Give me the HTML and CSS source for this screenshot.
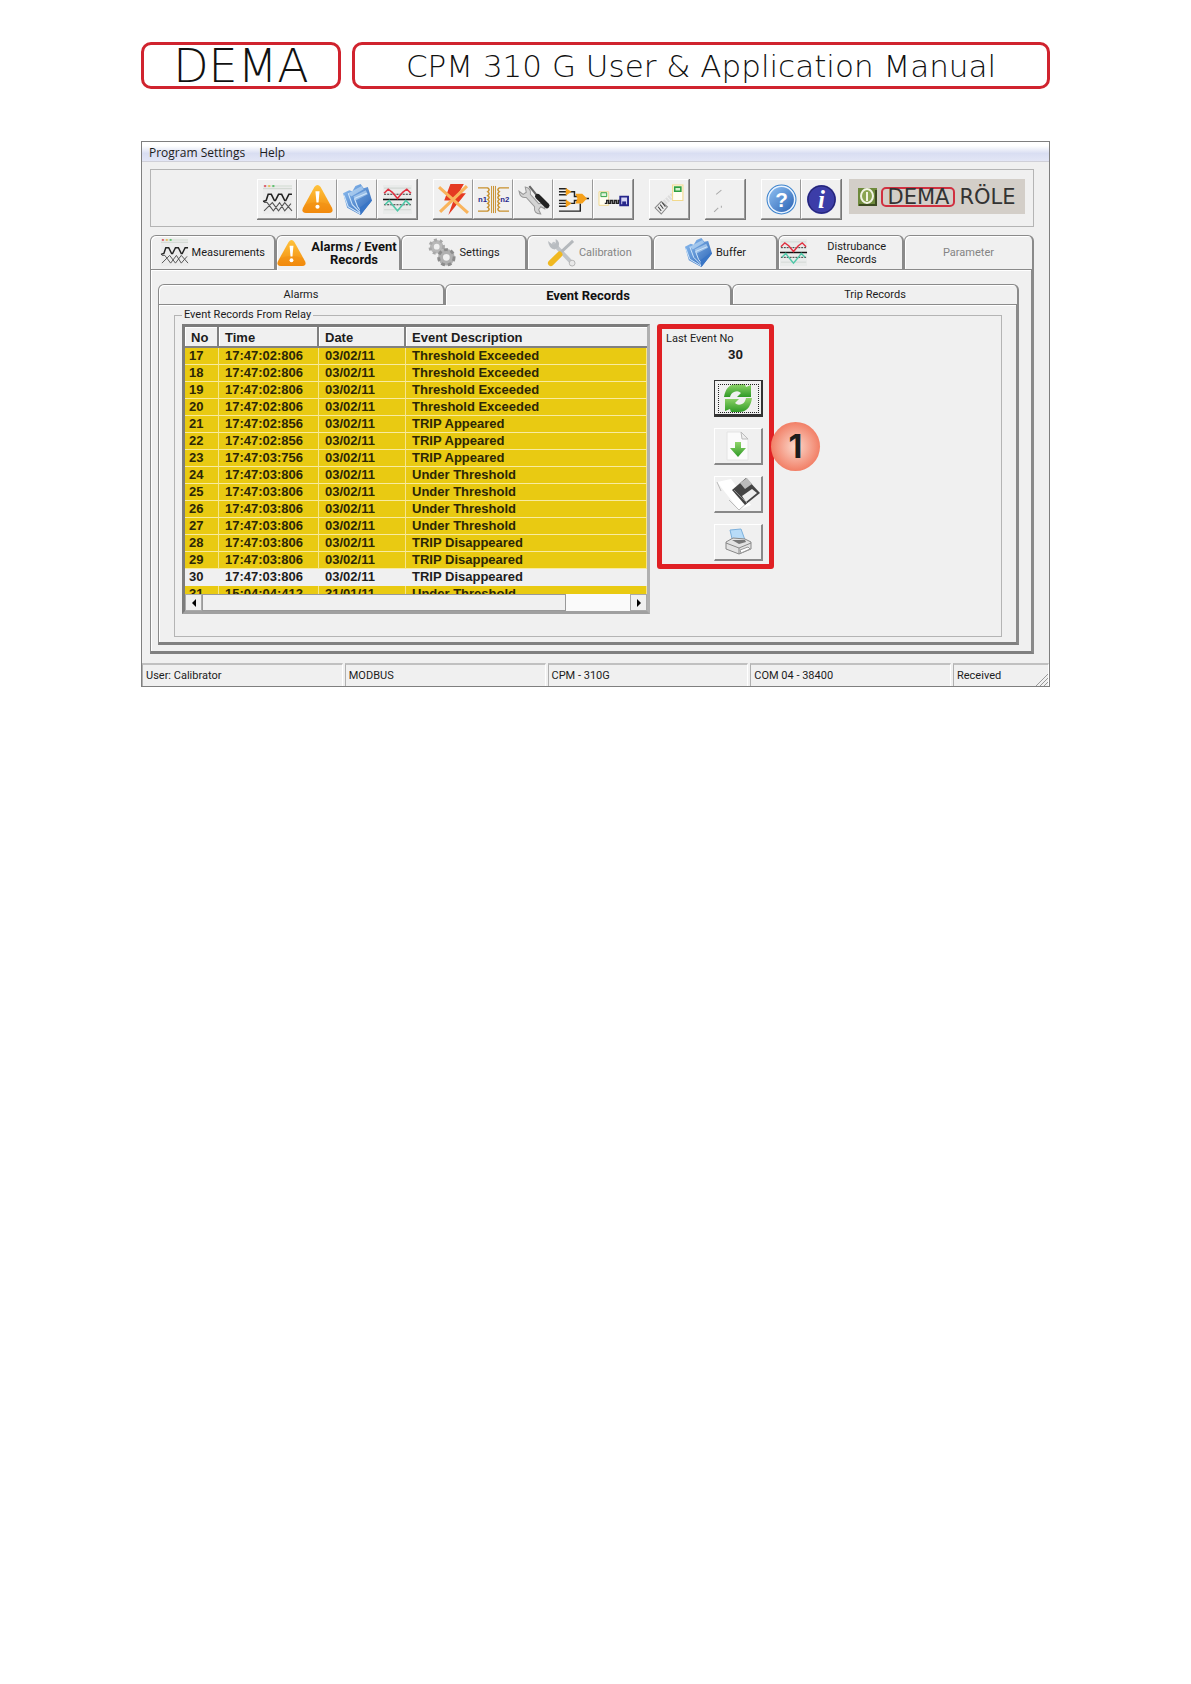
FILE: index.html
```html
<!DOCTYPE html>
<html lang="en">
<head>
    <meta charset="UTF-8">
    <meta name="viewport" content="width=device-width, initial-scale=1.0">
    <title>CPM 310 G User &amp; Application Manual</title>
    <link rel="stylesheet" href="styles.css">
</head>

<body>

    <!-- Shared icons -->
    <svg class="sprite" aria-hidden="true">
        <defs>
            <linearGradient id="orange" x1="0" y1="0" x2="0" y2="1">
                <stop offset="0" stop-color="#ffc33c"/>
                <stop offset="1" stop-color="#f28a0c"/>
            </linearGradient>
            <linearGradient id="blue" x1="0" y1="0" x2="1" y2="1">
                <stop offset="0" stop-color="#8fc0f2"/>
                <stop offset="1" stop-color="#2a62b4"/>
            </linearGradient>
            <linearGradient id="green" x1="0" y1="0" x2="0" y2="1">
                <stop offset="0" stop-color="#8fd46a"/>
                <stop offset="1" stop-color="#2f9a26"/>
            </linearGradient>
        </defs>
        <symbol id="waves" viewBox="0 0 30 30">
            <rect x="1" y="1" width="28" height="28" fill="#ececec"/>
            <path d="M1 4.500h28" stroke="#cfd6cf" stroke-width="1"/>
            <path d="M1 1h28v2H1z" fill="#dfe5df"/>
            <path d="M2 1h2v2H2z" fill="#e06070"/>
            <path d="M6 1h2v2H6z" fill="#e8c060"/>
            <path d="M10 1h2v2h-2z" fill="#60c070"/>
            <path d="M1 17l3-1 2-6h3l3 6h1l3-6h3l3 6h1l3-6h3" fill="none" stroke="#222" stroke-width="1.500"/>
            <path d="M2 26l8-8 6 8 6-8 7 8M2 18h3l6 8 6-8 5 8 6-7" fill="none" stroke="#555" stroke-width="1"/>
        </symbol>
        <symbol id="warning" viewBox="0 0 30 30">
            <path d="M12 3q3-4 6 0l11 20q2 5-3 5H4q-5 0-3-5z" fill="url(#orange)"/>
            <path d="M3 20q12-5 24 0l2 4q0 4-3 4H4q-3 0-3-4z" fill="#f08a10" opacity=".4"/>
            <path d="M13 7h4l-1 11h-2z" fill="#fff"/>
            <circle cx="15" cy="22" r="2" fill="#fff"/>
        </symbol>
        <symbol id="books" viewBox="0 0 30 30">
            <path d="M1 9l6-3 3 1 3-5 5-2 3 4 4-1 4 13-11 14L5 23z" fill="url(#blue)"/>
            <path d="M6 9l13-7 2 3L9 12zM11 12l12-6 2 4-12 6z" fill="#d8ecfc" opacity=".5"/>
            <path d="M2 11l4 11 12 7M6 9l4 11 8 8M12 14l3 8 4 5M12 14l12-5" fill="none" stroke="#cfe6fb" stroke-width="1"/>
            <path d="M18 30l-1-7 11-8 1 1z" fill="#3a76c6"/>
        </symbol>
        <symbol id="disturb" viewBox="0 0 30 30">
            <rect x="1" y="1" width="28" height="28" fill="#e9ebea"/>
            <path d="M2 4h26M2 25h26" stroke="#d2d8d4"/>
            <path d="M2 10h26M2 20h26" stroke="#333" stroke-dasharray="2 1"/>
            <path d="M1 15h28" stroke="#111" stroke-width="1.500"/>
            <path d="M2 9l4-4 4 3 5 6 5-6 4-3 4 4" fill="none" stroke="#e03040" stroke-width="1.500"/>
            <path d="M3 20l4-4 3 4 5 6 5-6 3-4 4 4" fill="none" stroke="#50c8a8" stroke-width="1.500"/>
        </symbol>
    </svg>

    <!-- Page header -->
    <header class="page-header">
        <div class="brand">DEMA</div>
        <h1 class="doc-title">CPM 310 G User &amp; Application Manual</h1>
    </header>

    <!-- Application window -->
    <main class="window">
        <nav class="menu-bar">
            <button>Program Settings</button>
            <button>Help</button>
        </nav>

        <div class="toolbar">
            <div class="tool-group">
                <button aria-label="Measurements"><svg><use href="#waves"/></svg></button>
                <button aria-label="Alarms"><svg><use href="#warning"/></svg></button>
                <button aria-label="Buffer"><svg><use href="#books"/></svg></button>
                <button aria-label="Disturbance"><svg><use href="#disturb"/></svg></button>
            </div>
            <div class="tool-group">
                <button aria-label="Trip off">
                    <svg viewBox="0 0 30 30">
                        <path d="M12 0h13l-5 9h7L10 30l5-14H6z" fill="#e53a22"/>
                        <path d="M1 3l28 25M28 2L2 27" stroke="#f9b45c" stroke-width="3"/>
                    </svg>
                </button>
                <button aria-label="Transformer">
                    <svg viewBox="0 0 32 30">
                        <path d="M14 1v28M16 1v28M18 1v28" stroke="#c8902c" stroke-width="1"/>
                        <path d="M0 3h10q3 2 0 4 3 2 0 4 3 2 0 4 3 2 0 4 3 2 0 4 3 2 0 4H0M32 3H22q-3 2 0 4-3 2 0 4-3 2 0 4-3 2 0 4-3 2 0 4-3 2 0 4h10" fill="none" stroke="#c8902c" stroke-width="1.500"/>
                        <text x="0" y="18" class="coil">n1</text>
                        <text x="23" y="18" class="coil">n2</text>
                    </svg>
                </button>
                <button aria-label="Tools">
                    <svg viewBox="0 0 30 30">
                        <path d="M1 7l4 3 3-2-1-5q6 1 5 7l8 9q6-1 6 5l-4-2-2 3 2 4q-7 0-6-7l-8-9Q2 14 1 7z" fill="#d4d4d4" stroke="#999" stroke-width="1"/>
                        <path d="M11 2l8 10" stroke="#666" stroke-width="2"/>
                        <path d="M19 12l9 9" stroke="#222" stroke-width="5" stroke-linecap="round"/>
                    </svg>
                </button>
                <button aria-label="Logic">
                    <svg viewBox="0 0 32 30">
                        <path d="M1 4h8M1 7h8M1 10h8M1 16h8M1 19h8M1 22h8M1 27h22v-8M12 7h5v5h3M12 19h5v-3h3M28 14h4" fill="none" stroke="#222" stroke-width="1.500"/>
                        <path d="M8 3l6 4-6 4zM8 15l6 4-6 4zM18 9h7l5 5-5 5h-7l2-5z" fill="#f5a01a"/>
                    </svg>
                </button>
                <button aria-label="Save to relay">
                    <svg viewBox="0 0 32 30">
                        <path d="M1 7h10v14H1z" fill="#fffdf0" stroke="#f0d890"/>
                        <path d="M3 8h6v4H3z" fill="#e0f5dc" stroke="#2fa040"/>
                        <path d="M7 19h2v-3h2v3h2v-3h2v3h2v-3h2v3h2v-3h2v3" fill="none" stroke="#222" stroke-width="1.500"/>
                        <path d="M23 12h8v9h-8z" fill="#d6d6f5" stroke="#28288c" stroke-width="2"/>
                        <path d="M25 17h4v4h-4z" fill="#28288c"/>
                    </svg>
                </button>
            </div>
            <div class="tool-group">
                <button aria-label="Connect">
                    <svg viewBox="0 0 30 30">
                        <path d="M8 20L20 9" stroke="#ddd" stroke-width="5" stroke-dasharray="2 1"/>
                        <path d="M18 1h10v15H18z" fill="#fffef4" stroke="#f2d98c"/>
                        <path d="M20 3h6v4h-6z" fill="#d4f0d0" stroke="#2fa040" stroke-width="1.500"/>
                        <path d="M1 23l6-6 6 5-6 7z" fill="#eee" stroke="#888"/>
                        <path d="M4 22l3 4M6 20l3 4M8 18l3 4" stroke="#444"/>
                    </svg>
                </button>
            </div>
            <div class="tool-group">
                <button aria-label="Disconnect">
                    <svg viewBox="0 0 30 30">
                        <path d="M6 10l5-4M4 27l4-4M11 21v2" stroke="#aaa" fill="none"/>
                    </svg>
                </button>
            </div>
            <div class="tool-group">
                <button aria-label="Help">
                    <svg viewBox="0 0 30 30">
                        <circle cx="15" cy="15" r="14" fill="#eaf4ff" stroke="#3c82cc"/>
                        <circle cx="15" cy="15" r="12" fill="url(#blue)"/>
                        <text x="15" y="22" class="glyph">?</text>
                    </svg>
                </button>
                <button aria-label="About">
                    <svg viewBox="0 0 30 30">
                        <circle cx="15" cy="15" r="14" fill="#3c3da8"/>
                        <circle cx="15" cy="15" r="13" fill="none" stroke="#22226a" stroke-width="1"/>
                        <text x="15" y="23" class="glyph info">i</text>
                    </svg>
                </button>
            </div>
            <div class="logo">
                <svg viewBox="0 0 19 18">
                    <path d="M0 0h19v18H0z" fill="#6f8a3c"/>
                    <path d="M1 17h17V2" fill="none" stroke="#3c4a20" stroke-width="2"/>
                    <ellipse cx="9" cy="8" rx="6" ry="7" fill="#8ba552" stroke="#f2f4e4" stroke-width="2"/>
                    <path d="M8 4h2v9H8z" fill="#f2f4e4"/>
                </svg>
                <span class="logo-dema">DEMA</span>
                <span>RÖLE</span>
            </div>
        </div>

        <div class="tabs main-tabs" role="tablist">
            <button class="tab" role="tab"><svg><use href="#waves"/></svg><span>Measurements</span></button>
            <button class="tab active" role="tab" aria-selected="true"><svg><use href="#warning"/></svg><span>Alarms / Event Records</span></button>
            <button class="tab" role="tab">
                <svg viewBox="0 0 30 30">
                    <circle cx="9" cy="9" r="5" fill="none" stroke="#b8b8b8" stroke-width="4"/>
                    <circle cx="9" cy="9" r="7" fill="none" stroke="#a8a8a8" stroke-width="3" stroke-dasharray="3 3"/>
                    <circle cx="19" cy="20" r="6" fill="none" stroke="#b0b0b0" stroke-width="5"/>
                    <circle cx="19" cy="20" r="8" fill="none" stroke="#8c8c8c" stroke-width="3" stroke-dasharray="4 3"/>
                </svg>
                <span>Settings</span>
            </button>
            <button class="tab" role="tab" disabled>
                <svg viewBox="0 0 30 30">
                    <path d="M7 6l19 20" stroke="#c0c4c8" stroke-width="4" stroke-linecap="round"/>
                    <path d="M1 3l5 4 3-1 0-5q5 3 3 8l-4 3Q2 11 1 3z" fill="#b8bcc0"/>
                    <circle cx="26" cy="26" r="3" fill="#e8e8e8" stroke="#b4b4b4"/>
                    <path d="M12 17L27 3" stroke="#b4b8bc" stroke-width="3"/>
                    <path d="M4 26l9-9" stroke="#f0b820" stroke-width="6" stroke-linecap="round"/>
                </svg>
                <span>Calibration</span>
            </button>
            <button class="tab" role="tab"><svg><use href="#books"/></svg><span>Buffer</span></button>
            <button class="tab spread" role="tab"><svg><use href="#disturb"/></svg><span>Distrubance Records</span></button>
            <button class="tab" role="tab" disabled><span>Parameter</span></button>
        </div>

        <div class="panel main-panel">
            <div class="tabs sub-tabs" role="tablist">
                <button class="tab" role="tab">Alarms</button>
                <button class="tab active" role="tab" aria-selected="true">Event Records</button>
                <button class="tab" role="tab">Trip Records</button>
            </div>

            <div class="panel sub-panel">
                <fieldset class="records">
                    <legend>Event Records From Relay</legend>

                    <div class="grid-box">
                        <div class="grid-view">
                            <table class="events">
                                <thead>
                                    <tr>
                                        <th class="col-no">No</th>
                                        <th class="col-time">Time</th>
                                        <th class="col-date">Date</th>
                                        <th>Event Description</th>
                                    </tr>
                                </thead>
                                <tbody>
                                    <tr><td>17</td><td>17:47:02:806</td><td>03/02/11</td><td>Threshold Exceeded</td></tr>
                                    <tr><td>18</td><td>17:47:02:806</td><td>03/02/11</td><td>Threshold Exceeded</td></tr>
                                    <tr><td>19</td><td>17:47:02:806</td><td>03/02/11</td><td>Threshold Exceeded</td></tr>
                                    <tr><td>20</td><td>17:47:02:806</td><td>03/02/11</td><td>Threshold Exceeded</td></tr>
                                    <tr><td>21</td><td>17:47:02:856</td><td>03/02/11</td><td>TRIP Appeared</td></tr>
                                    <tr><td>22</td><td>17:47:02:856</td><td>03/02/11</td><td>TRIP Appeared</td></tr>
                                    <tr><td>23</td><td>17:47:03:756</td><td>03/02/11</td><td>TRIP Appeared</td></tr>
                                    <tr><td>24</td><td>17:47:03:806</td><td>03/02/11</td><td>Under Threshold</td></tr>
                                    <tr><td>25</td><td>17:47:03:806</td><td>03/02/11</td><td>Under Threshold</td></tr>
                                    <tr><td>26</td><td>17:47:03:806</td><td>03/02/11</td><td>Under Threshold</td></tr>
                                    <tr><td>27</td><td>17:47:03:806</td><td>03/02/11</td><td>Under Threshold</td></tr>
                                    <tr><td>28</td><td>17:47:03:806</td><td>03/02/11</td><td>TRIP Disappeared</td></tr>
                                    <tr><td>29</td><td>17:47:03:806</td><td>03/02/11</td><td>TRIP Disappeared</td></tr>
                                    <tr class="selected"><td>30</td><td>17:47:03:806</td><td>03/02/11</td><td>TRIP Disappeared</td></tr>
                                    <tr><td>31</td><td>15:04:04:412</td><td>31/01/11</td><td>Under Threshold</td></tr>
                                </tbody>
                            </table>
                        </div>
                        <div class="scrollbar">
                            <button aria-label="Scroll left"><svg viewBox="0 0 8 8"><path d="M6 0v8L2 4z"/></svg></button>
                            <div class="track"><div class="thumb"></div></div>
                            <button aria-label="Scroll right"><svg viewBox="0 0 8 8"><path d="M2 0v8l4-4z"/></svg></button>
                        </div>
                    </div>

                    <div class="actions">
                        <span class="last-label">Last Event No</span>
                        <span class="last-value">30</span>
                        <div class="action-list">
                            <button class="focused" aria-label="Refresh">
                                <svg viewBox="0 0 32 30">
                                    <path d="M2 14Q4 1 15 1l8 0 1 3 5-2v12H15l4-4q-3-3-7-1-3 1-4 5z" fill="url(#green)"/>
                                    <path d="M30 15q-2 14-13 14H9l-1-3-5 2V16h14l-4 4q3 3 7 1 3-1 4-6z" fill="url(#green)"/>
                                </svg>
                            </button>
                            <button aria-label="Download">
                                <svg viewBox="0 0 32 30">
                                    <path d="M5 1h14l7 7v21H5z" fill="#fbfbfb" stroke="#e4e4e4"/>
                                    <path d="M19 1l7 7h-6z" fill="#eee" stroke="#bbb"/>
                                    <path d="M13 11h6v6h5l-8 9-8-9h5z" fill="url(#green)"/>
                                </svg>
                            </button>
                            <button aria-label="Save">
                                <svg class="wide" viewBox="0 0 46 34">
                                    <path d="M2 5l14-3 20 26-12 5z" fill="#fff"/>
                                    <path d="M2 5l4 9M14 23l10 10 9-8" fill="none" stroke="#bbb" stroke-width="1"/>
                                    <path d="M31 1l14 15-15 12-13-15z" fill="#444"/>
                                    <path d="M25 6l7-5 5 6-7 5z" fill="#bbb"/>
                                    <path d="M27 19l10-7 5 4-11 9z" fill="#eee"/>
                                    <path d="M19 13l13 13" stroke="#888" stroke-width="1"/>
                                </svg>
                            </button>
                            <button aria-label="Print">
                                <svg viewBox="0 0 32 30">
                                    <path d="M8 3l11-1 4 11-12 3z" fill="#b8dcf8" stroke="#7cb0dc"/>
                                    <path d="M4 15l7-4 12 1 6 3v7l-12 5-13-5z" fill="#e2e2e2" stroke="#888"/>
                                    <path d="M4 16l13 5 12-5M17 21v6" fill="none" stroke="#888"/>
                                    <path d="M10 13l13 0 1 2-7 2z" fill="#777"/>
                                    <path d="M18 23l8-3 2 2-9 4z" fill="#fff" stroke="#999"/>
                                </svg>
                            </button>
                        </div>
                        <span class="callout">1</span>
                    </div>
                </fieldset>
            </div>
        </div>

        <footer class="status-bar">
            <span>User: Calibrator</span>
            <span>MODBUS</span>
            <span>CPM - 310G</span>
            <span>COM 04 - 38400</span>
            <span class="last">Received
                <svg viewBox="0 0 12 12"><path d="M0 12L12 0M4 12l8-8M8 12l4-4" stroke="#999" fill="none"/></svg>
            </span>
        </footer>
    </main>

</body>
</html>
```
FILE: styles.css
```css
* {
    box-sizing: border-box;
}

body {
    margin: 0;
    padding: 42px 141px;
    background: #fff;
    color: #1c1c1c;
    font-family: Roboto, sans-serif;
    font-size: 11px;
}

button {
    font: inherit;
    color: inherit;
    background: none;
    border: 0;
    padding: 0;
}

.sprite {
    position: absolute;
    width: 0;
    height: 0;
}

/* Page header */
.page-header {
    display: flex;
    gap: 11px;
    height: 47px;
    font-family: "DejaVu Sans", sans-serif;
    font-weight: 200;
    color: #111;
}

.brand,
.doc-title {
    display: flex;
    align-items: center;
    justify-content: center;
    margin: 0;
    border: 3px solid #d0232e;
    border-radius: 10px;
    white-space: nowrap;
}

.brand {
    flex: 0 0 200px;
    font-size: 46px;
}

.doc-title {
    flex: 1;
    font-size: 31px;
    font-weight: 200;
}

/* Window frame */
.window {
    margin-top: 52px;
    border: 1px solid #7f7f7f;
    background: #f0f0f0;
}

.menu-bar {
    display: flex;
    gap: 14px;
    height: 20px;
    padding: 2px 7px 0;
    background: linear-gradient(#fff 20%, #d9def2 60%, #e3e6f6);
    border-bottom: 1px solid #d0d0d8;
    font-family: "Open Sans", sans-serif;
    font-size: 12px;
    line-height: 18px;
}

/* Toolbar */
.toolbar {
    display: flex;
    justify-content: flex-end;
    gap: 15px;
    height: 58px;
    margin: 7px 15px 0 8px;
    padding: 9px 8px;
    border: 1px solid #b4b4b4;
}

.tool-group {
    display: flex;
    height: 41px;
    border-right: 1px solid #777;
    border-bottom: 1px solid #777;
}

.tool-group button {
    display: flex;
    align-items: center;
    justify-content: center;
    width: 40px;
    border: 1px solid #fff;
    border-right-color: #999;
    border-bottom-color: #999;
}

.tool-group svg {
    width: 31px;
    height: 31px;
    overflow: visible;
}

.coil {
    font: bold 8px "Liberation Sans", sans-serif;
    fill: #28288c;
}

.glyph {
    font: bold 20px "Liberation Sans", sans-serif;
    fill: #fff;
    text-anchor: middle;
}

.info {
    font: italic bold 24px "Liberation Serif", serif;
}

.logo {
    display: flex;
    align-items: center;
    justify-content: center;
    gap: 4px;
    width: 176px;
    height: 35px;
    margin-left: -8px;
    background: #d3cec8;
    color: #333;
    font-family: "DejaVu Sans", sans-serif;
    font-size: 21px;
}

.logo svg {
    flex: none;
    width: 19px;
    height: 18px;
}

.logo-dema {
    padding: 0 4px;
    border: 2px solid #d03040;
    border-radius: 5px;
    line-height: 16px;
}

/* Tabs */
.tabs {
    display: grid;
    grid-template-columns: repeat(3, 1fr);
}

.tab {
    display: flex;
    align-items: center;
    justify-content: center;
    gap: 3px;
    line-height: 13px;
    border: 1px solid #8a8a8a;
    border-right: 2px solid #8a8a8a;
    border-bottom: 0;
    border-radius: 6px 6px 0 0;
    box-shadow: inset 1px 1px #fff;
}

.tab:disabled {
    color: #848484;
}

.tab.active {
    position: relative;
    margin-bottom: -1px;
    background: #f0f0f0;
    color: #111;
    font-size: 13px;
    font-weight: bold;
}

.tab svg {
    flex: none;
    width: 29px;
    height: 29px;
}

.tab.spread span {
    flex: 1;
    padding: 0 8px;
}

.main-tabs {
    grid-template-columns: repeat(6, minmax(0, 1fr)) 130px;
    height: 34px;
    margin: 8px 15px 0 8px;
}

.sub-tabs {
    height: 20px;
}

.panel {
    border: 1px solid #8a8a8a;
    border-right: 3px solid #8a8a8a;
    border-bottom: 3px solid #808080;
    box-shadow: inset 1px 1px #fff;
}

.main-panel {
    margin: 0 15px 0 8px;
    padding: 14px 12px 6px 7px;
}

.sub-panel {
    padding: 3px 14px 5px 15px;
}

/* Event records */
.records {
    display: flex;
    align-items: flex-start;
    gap: 7px;
    min-width: 0;
    margin: 0;
    padding: 2px 7px 22px;
    border: 1px solid #b4b4b4;
}

.records legend {
    padding: 0 2px;
    line-height: 14px;
}

.grid-box {
    flex: 0 0 468px;
    border: 3px solid #7c7c7c;
    border-right-color: #b0b0b0;
    border-bottom-color: #a0a0a0;
}

.grid-view {
    height: 267px;
    overflow: hidden;
}

.events {
    width: 100%;
    table-layout: fixed;
    border-collapse: separate;
    border-spacing: 0;
    font-family: "Liberation Sans", sans-serif;
    font-size: 13px;
    font-weight: bold;
    line-height: 16px;
}

.events th {
    height: 21px;
    padding: 2px 6px 0;
    text-align: left;
    border-right: 2px solid #808080;
    border-bottom: 2px solid #808080;
    box-shadow: inset 1px 1px #fff;
}

.events th:last-child {
    border-right: 0;
}

.events td {
    padding: 0 6px;
    background: #e9ca12;
    border-right: 1px solid #f6e58c;
    border-bottom: 1px solid #f8eba0;
    color: #2c2606;
    white-space: nowrap;
}

.events td:first-child {
    padding-left: 4px;
}

.events .selected td {
    background: #f0f0f0;
    border-color: #f0f0f0;
    color: #1c1c1c;
}

.col-no {
    width: 34px;
}

.col-time {
    width: 100px;
}

.col-date {
    width: 87px;
}

.scrollbar {
    display: flex;
    height: 17px;
    background: #fafafa;
}

.scrollbar button {
    display: flex;
    align-items: center;
    justify-content: center;
    width: 17px;
    background: #f0f0f0;
    border: 1px solid #aaa;
}

.scrollbar svg {
    width: 8px;
    height: 8px;
}

.track {
    flex: 1;
}

.thumb {
    width: 85%;
    height: 100%;
    background: #f0f0f0;
    border: 1px solid #999;
}

/* Side actions */
.actions {
    position: relative;
    display: flex;
    flex-direction: column;
    width: 117px;
    padding: 2px 6px 3px 4px;
    border: 5px solid #e02024;
    border-radius: 3px;
}

.last-label,
.last-value {
    line-height: 16px;
}

.last-value {
    padding-right: 20px;
    text-align: right;
    font-size: 13px;
    font-weight: bold;
}

.action-list {
    display: flex;
    flex-direction: column;
    align-items: flex-end;
    gap: 11px;
    padding-top: 17px;
}

.action-list button {
    display: flex;
    align-items: center;
    justify-content: center;
    width: 49px;
    height: 37px;
    border: 1px solid #fff;
    border-right: 2px solid #888;
    border-bottom: 2px solid #888;
}

.action-list .focused {
    border: 1px solid #333;
    border-right: 2px solid #333;
    border-bottom: 3px solid #333;
    outline: 1px dotted #222;
    outline-offset: -5px;
}

.action-list svg {
    width: 32px;
    height: 30px;
}

.action-list .wide {
    width: 46px;
    height: 34px;
}

.callout {
    position: absolute;
    top: 93px;
    left: 109px;
    width: 49px;
    height: 49px;
    border-radius: 50%;
    background: radial-gradient(#fbd9cc, #ee5a3c);
    color: #1c1c1c;
    font: bold 32px/49px Inter, sans-serif;
    text-align: center;
}

/* Status bar */
.status-bar {
    display: grid;
    grid-template-columns: repeat(4, 1fr) 96px;
    gap: 2px;
    margin-top: 9px;
}

.status-bar span {
    padding: 0 3px;
    line-height: 21px;
    border-top: 2px solid #c0c0c0;
    border-left: 1px solid #b0b0b0;
    border-right: 1px solid #fff;
}

.status-bar .last {
    display: flex;
    align-items: flex-end;
    justify-content: space-between;
    padding-right: 0;
}

.status-bar svg {
    width: 12px;
    height: 12px;
}
```
